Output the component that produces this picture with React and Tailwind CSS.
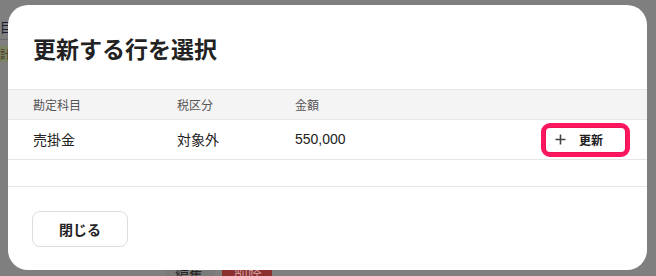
import React from "react";

const rows = [{ account: "売掛金", tax: "対象外", amount: "550,000" }];

// dimmed page that sits behind the overlay
function BackPage() {
  return (
    <div className="absolute inset-0 flex flex-col justify-between">
      <div className="w-[10px] flex flex-col">
        <div className="h-[40px] pt-[20px] text-[13px] leading-none text-[#1a1a2e] border-b border-[#6a6a6a]">目</div>
        <div className="mt-[6px] h-[16px] bg-[#7a8465] text-[11px] leading-[16px] text-[#4a3c20]">計</div>
      </div>
      <div className="flex gap-[7px] pl-[165px] h-[8px] overflow-hidden">
        <div className="w-[50px] bg-[#7a7a7a] text-[14px] leading-[14px] text-[#222] pl-[10px]">編集</div>
        <div className="w-[50px] bg-[#8b2f2f] text-[14px] leading-[14px] text-[#c99] pl-[12px]">削除</div>
      </div>
    </div>
  );
}

export default function App() {
  return (
    <div
      className="relative w-[656px] h-[276px] overflow-hidden bg-[#7f7f7f] pl-[8px] pt-[5px]"
      style={{ fontFamily: '"Noto Sans CJK JP", "Noto Sans", sans-serif' }}
    >
      <BackPage />

      <div className="relative w-[639px] h-[265px] bg-white rounded-[20px] overflow-hidden flex flex-col">
        <h2 className="px-[25px] pt-[27px] h-[84px] text-[23px] font-bold text-[#222] leading-[32px]">
          更新する行を選択
        </h2>

        <table className="w-full border-collapse text-left">
          <thead>
            <tr className="bg-[#f5f4f5] border-y border-[#e6e6e6] h-[30px]">
              <th className="pl-[25px] w-[169px] text-[12px] font-normal text-[#555]">勘定科目</th>
              <th className="w-[118px] text-[12px] font-normal text-[#555]">税区分</th>
              <th className="text-[12px] font-normal text-[#555]">金額</th>
              <th />
            </tr>
          </thead>
          <tbody>
            {rows.map((r) => (
              <tr key={r.account} className="border-b border-[#e6e6e6] h-[40px]">
                <td className="pl-[25px] text-[14px] text-[#222]">{r.account}</td>
                <td className="text-[14px] text-[#222]">{r.tax}</td>
                <td className="text-[14px] text-[#222]" style={{ fontFamily: '"Liberation Sans", "Noto Sans CJK JP", sans-serif' }}>
                  {r.amount}
                </td>
                <td className="pr-[17px]">
                  <div className="ml-auto w-[89px] h-[34px] rounded-[9px] border-[5px] border-[#ff1760] bg-white">
                    <button className="w-full h-full flex items-center gap-[13px] pl-[9px] text-[12px] font-bold text-[#222] shadow-[0_0_2px_rgba(0,0,0,0.25)]">
                      <svg width="11" height="11" viewBox="0 0 11 11" className="text-[#444]">
                        <path d="M5.5 0.5v10M0.5 5.5h10" stroke="currentColor" strokeWidth="1.6" />
                      </svg>
                      更新
                    </button>
                  </div>
                </td>
              </tr>
            ))}
          </tbody>
        </table>

        <div className="h-[27px] border-b border-[#e6e6e6]" />

        <div className="px-[24px] pt-[24px]">
          <button className="w-[96px] h-[36px] rounded-[8px] border border-[#dddddd] bg-white text-[14px] font-bold text-[#222]">
            閉じる
          </button>
        </div>
      </div>
    </div>
  );
}
